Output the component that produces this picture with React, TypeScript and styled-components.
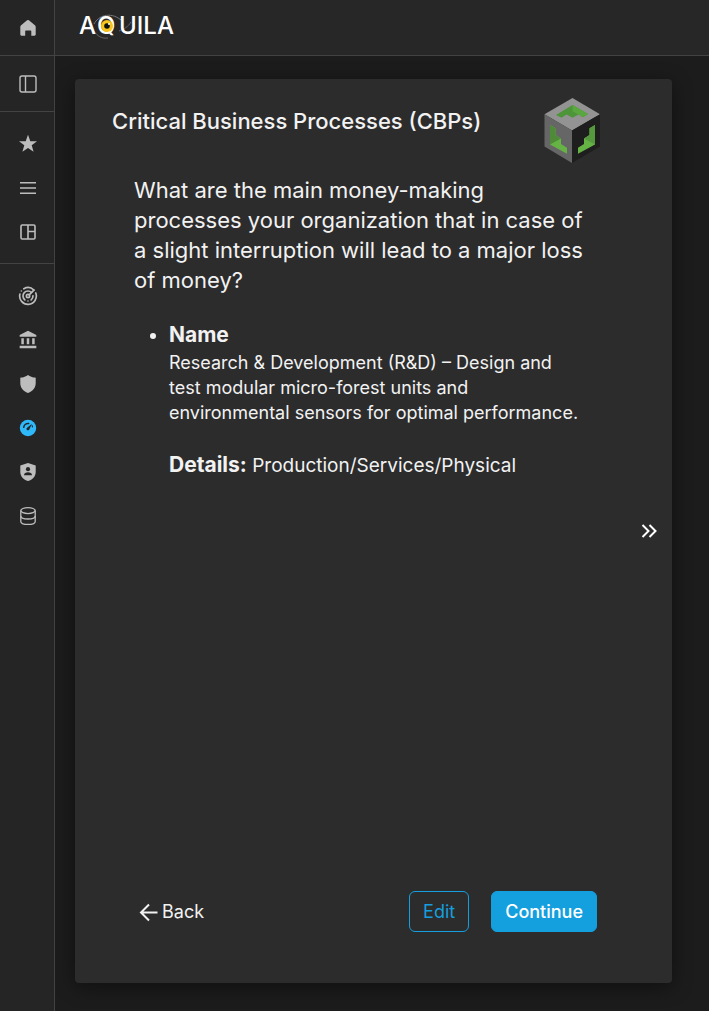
import React from "react";
import styled, { createGlobalStyle } from "styled-components";
import { Radar } from "lucide-react";
import { MdAccountBalance } from "react-icons/md";

const GlobalStyle = createGlobalStyle`
  *, *::before, *::after { box-sizing: border-box; }
  body {
    margin: 0;
    background: #1c1c1c;
    color: #f2f2f2;
    font-family: Inter, "Liberation Sans", sans-serif;
  }
  button { font: inherit; cursor: pointer; }
`;

const Shell = styled.div`
  display: grid;
  grid-template-columns: 55px 1fr;
  grid-template-rows: 56px 1fr;
  min-height: 100vh;
`;

const Sidebar = styled.nav`
  grid-row: 1 / 3;
  background: #252525;
  border-right: 1px solid #434343;
`;

const NavGroup = styled.div<{ $roomy?: boolean; $last?: boolean }>`
  display: flex;
  flex-direction: column;
  align-items: center;
  gap: 20px;
  padding: ${(p) => (p.$roomy ? "20px 0 19px" : "16px 0 15px")};
  border-bottom: ${(p) => (p.$last ? "0" : "1px solid #434343")};
`;

const NavLink = styled.a<{ $active?: boolean }>`
  display: grid;
  place-items: center;
  width: 24px;
  height: 24px;
  margin-left: 2px;
  color: ${(p) => (p.$active ? "#2fb9fb" : "#bdbdbd")};
`;

const Header = styled.header`
  display: flex;
  align-items: center;
  padding: 0 24px;
  background: #272727;
  border-bottom: 1px solid #434343;
`;

const Main = styled.main`
  display: flex;
  padding: 23px 37px 28px 20px;
`;

const Card = styled.section`
  display: flex;
  flex: 1;
  background: #2c2c2c;
  border-radius: 4px;
  box-shadow: 0 4px 20px rgba(0, 0, 0, 0.45);
`;

const Content = styled.div`
  display: flex;
  flex-direction: column;
  flex: 1;
  padding: 16px 0 51px 37px;
`;

const TitleRow = styled.div`
  display: flex;
  justify-content: space-between;
  align-items: flex-start;
  padding-right: 38px;
`;

const Title = styled.h1`
  margin: 11px 0 0;
  font-size: 22px;
  line-height: 30px;
  font-weight: 500;
`;

const Body = styled.div`
  flex: 1;
  padding: 10px 52px 0 22px;
`;

const Question = styled.p`
  margin: 0;
  font-size: 22px;
  line-height: 30px;
`;

const Processes = styled.ul`
  margin: 25px 0 0;
  padding-left: 35px;
  font-size: 18px;
  line-height: 25px;

  li::marker { font-size: 20px; }
`;

const Term = styled.strong`
  font-size: 21px;
  line-height: 30px;
  font-weight: 700;
`;

const Text = styled.p<{ $large?: boolean }>`
  margin: 0 0 25px;
  font-size: ${(p) => (p.$large ? 19 : 18)}px;
`;

const Footer = styled.footer`
  display: flex;
  align-items: center;
  gap: 22px;
  padding: 0 43px 0 27px;
`;

const BackButton = styled.button`
  display: flex;
  align-items: center;
  gap: 4px;
  margin-right: auto;
  padding: 0;
  border: 0;
  background: none;
  color: #f2f2f2;
  font-size: 18px;
`;

const ActionButton = styled.button<{ $primary?: boolean }>`
  height: 41px;
  padding: 0 13px;
  border: 1px solid #149fde;
  border-radius: 6px;
  background: ${(p) => (p.$primary ? "#149fde" : "transparent")};
  color: ${(p) => (p.$primary ? "#ffffff" : "#149fde")};
  font-size: 18px;
  font-weight: ${(p) => (p.$primary ? 500 : 400)};
`;

const NextButton = styled.button`
  display: grid;
  align-self: center;
  margin-right: 14px;
  padding: 0;
  border: 0;
  background: none;
  color: #ffffff;
`;

const HomeIcon = () => (
  <svg width="20" height="20" viewBox="0 0 20 20" fill="currentColor" aria-hidden="true">
    <path d="M9.1 2.3a1.4 1.4 0 0 1 1.8 0l6 5c.5.4.8.9.8 1.5v7.8c0 .7-.5 1.200-1.200 1.200h-3.200v-4.600c0-.5-.3-.8-.8-.8H8c-.5 0-.8.3-.8.8v4.600H3.500c-.7 0-1.200-.5-1.200-1.200V8.800c0-.6.3-1.100.8-1.500z" />
  </svg>
);

const PanelIcon = () => (
  <svg width="20" height="20" viewBox="0 0 20 20" fill="none" stroke="currentColor" strokeWidth="1.400" aria-hidden="true">
    <rect x="2" y="2" width="16" height="16" rx="2" />
    <path d="M7.500 2v16" />
  </svg>
);

const StarIcon = () => (
  <svg width="20" height="20" viewBox="0 0 20 20" fill="currentColor" aria-hidden="true">
    <path d="M10 .8l2.300 6.400h6.700l-5.300 4.100 1.900 6.500-5.600-3.900-5.600 3.900 1.900-6.500L1 7.200h6.700z" />
  </svg>
);

const MenuIcon = () => (
  <svg width="20" height="20" viewBox="0 0 20 20" fill="none" stroke="currentColor" strokeWidth="1.600" aria-hidden="true">
    <path d="M2 4.800h16M2 10h16M2 15.200h16" />
  </svg>
);

const LayoutIcon = () => (
  <svg width="20" height="20" viewBox="0 0 20 20" fill="none" stroke="currentColor" strokeWidth="1.600" aria-hidden="true">
    <rect x="3" y="3" width="14" height="14" rx="1.200" />
    <path d="M10 3v14M10 9.500h7" />
  </svg>
);

const ShieldIcon = () => (
  <svg width="20" height="20" viewBox="0 0 20 20" fill="currentColor" aria-hidden="true">
    <path d="M10 .9c2 1.600 4.500 2.500 7.200 2.600.3 0 .5.3.5.6v5.200c0 4.400-2.700 7.700-7.700 9.700-5-2-7.700-5.300-7.700-9.700V4.100c0-.3.2-.6.5-.6C5.500 3.400 8 2.500 10 .9z" />
  </svg>
);

const GaugeIcon = () => (
  <svg width="20" height="20" viewBox="0 0 20 20" fill="none" strokeLinecap="round" aria-hidden="true">
    <circle cx="10" cy="10" r="8.200" fill="currentColor" />
    <path d="M5.700 9.300a4.600 4.600 0 0 1 5-3.800" stroke="#252525" strokeWidth="1.500" />
    <path d="M14.200 7.800c.2.400.2.700.2 1" stroke="#252525" strokeWidth="1.200" />
    <path d="M14 5.800l-4.600 3.600a1.500 1.500 0 1 0 2 1.800z" fill="#252525" />
  </svg>
);

const ShieldUserIcon = () => (
  <svg width="20" height="20" viewBox="0 0 20 20" aria-hidden="true">
    <path d="M10 1l7.700 2.600v6.300c0 4.200-3.200 7.800-7.700 9.100-4.500-1.300-7.700-4.900-7.700-9.100V3.600z" fill="currentColor" />
    <circle cx="10" cy="7.200" r="2.100" fill="#252525" />
    <path d="M6 13.200c0-2 2-2.900 4-2.900s4 .9 4 2.900z" fill="#252525" />
  </svg>
);

const DatabaseIcon = () => (
  <svg width="20" height="20" viewBox="0 0 20 20" fill="none" stroke="currentColor" strokeWidth="1.300" aria-hidden="true">
    <ellipse cx="10" cy="4.600" rx="7.200" ry="3" />
    <path d="M2.800 4.600v10.800c0 1.700 3.200 3 7.200 3s7.200-1.300 7.200-3V4.600" />
    <path d="M2.800 10c0 1.700 3.200 3 7.200 3s7.200-1.300 7.200-3" />
  </svg>
);

const Logo = () => (
  <svg width="104" height="32" viewBox="0 0 104 32" role="img" aria-label="AQUILA">
    <path d="M15 12C19 4 31-1 42 8" fill="none" stroke="#777" strokeWidth="1" />
    <path d="M15 19c3 5 8 8 14 7M52 10c-3 5-7 7-12 9" fill="none" stroke="#666" strokeWidth="1" />
    <g fontSize="24" fontWeight="500" fill="#fff" fontFamily="Inter, sans-serif">
      <text x="0" y="22">A</text>
      <text x="18" y="22">Q</text>
      <text x="40" y="22">UILA</text>
    </g>
    <circle cx="28" cy="14" r="6" fill="#f7c51e" />
    <circle cx="28" cy="14" r="2.800" fill="#101010" />
    <circle cx="30" cy="12" r="1" fill="#fff" />
  </svg>
);

const CubeLogo = () => (
  <svg width="60" height="70" viewBox="0 0 60 70" aria-hidden="true">
    <path d="M30.500 3L58 19.300 30 35.500 2.500 19.300z" fill="#939393" />
    <path d="M2.500 19.300L30 35.500V68L2.500 51.500z" fill="#666" />
    <path d="M58 19.300L30 35.500V68l28-16.500z" fill="#1e1e1e" />
    <path d="M14 20L30.500 10 46 19l-5 3.200-4.500-2.700-6 3.200-6-3.200-5 3.200z" fill="#4e9438" />
    <path d="M30.500 10L46 19l-5 3.200-4.500-2.700-6-3.200z" fill="#5aa63f" />
    <path d="M8 30l5.500 3.300V40l5.500 3.500V49l6 3.800v6L8 49.500z" fill="#66b345" />
    <path d="M8 30l5.500 3.300V40l5.500 3.500L8 49.500z" fill="#4e8a38" />
    <path d="M53 30l-5.500 3.300V40L42 43.500V49l-6 3.800v6l17-9.300z" fill="#66b345" />
    <path d="M53 30l-5.500 3.300V40L42 43.500l11 6z" fill="#55983d" />
  </svg>
);

const ArrowLeftIcon = () => (
  <svg width="19" height="20" viewBox="0 0 19 20" fill="none" stroke="currentColor" strokeWidth="2" aria-hidden="true">
    <path d="M18.500 10.500H2.500M10 2.500l-8 8 8 8" />
  </svg>
);

const DoubleChevronIcon = () => (
  <svg width="18" height="18" viewBox="0 0 18 18" fill="none" stroke="currentColor" strokeWidth="2" aria-hidden="true">
    <path d="M2.500 3l6 6-6 6M9.500 3l6 6-6 6" />
  </svg>
);

const navGroups = [
  { items: [{ label: "Home", icon: <HomeIcon /> }] },
  { items: [{ label: "Toggle panel", icon: <PanelIcon /> }] },
  {
    roomy: true,
    items: [
      { label: "Favorites", icon: <StarIcon /> },
      { label: "Menu", icon: <MenuIcon /> },
      { label: "Layout", icon: <LayoutIcon /> },
    ],
  },
  {
    roomy: true,
    items: [
      { label: "Radar", icon: <Radar size={20} /> },
      { label: "Governance", icon: <MdAccountBalance size={20} /> },
      { label: "Protection", icon: <ShieldIcon /> },
      { label: "Assessment", icon: <GaugeIcon />, active: true },
      { label: "Privacy", icon: <ShieldUserIcon /> },
      { label: "Data", icon: <DatabaseIcon /> },
    ],
  },
];

export default function App() {
  return (
    <>
      <GlobalStyle />
      <Shell>
        <Sidebar aria-label="Main">
          {navGroups.map((group, index) => (
            <NavGroup key={index} $roomy={group.roomy} $last={index === navGroups.length - 1}>
              {group.items.map((item) => (
                <NavLink key={item.label} href="#" aria-label={item.label} $active={"active" in item}>
                  {item.icon}
                </NavLink>
              ))}
            </NavGroup>
          ))}
        </Sidebar>
        <Header>
          <Logo />
        </Header>
        <Main>
          <Card>
            <Content>
              <TitleRow>
                <Title>Critical Business Processes (CBPs)</Title>
                <CubeLogo />
              </TitleRow>
              <Body>
                <Question>
                  What are the main money-making processes your organization that in case of a slight
                  interruption will lead to a major loss of money?
                </Question>
                <Processes>
                  <li>
                    <Term>Name</Term>
                    <Text>
                      Research &amp; Development (R&amp;D) – Design and test modular micro-forest units and
                      environmental sensors for optimal performance.
                    </Text>
                    <Text $large>
                      <Term>Details:</Term> Production/Services/Physical
                    </Text>
                  </li>
                </Processes>
              </Body>
              <Footer>
                <BackButton type="button">
                  <ArrowLeftIcon />
                  Back
                </BackButton>
                <ActionButton type="button">Edit</ActionButton>
                <ActionButton type="button" $primary>
                  Continue
                </ActionButton>
              </Footer>
            </Content>
            <NextButton type="button" aria-label="Next">
              <DoubleChevronIcon />
            </NextButton>
          </Card>
        </Main>
      </Shell>
    </>
  );
}
